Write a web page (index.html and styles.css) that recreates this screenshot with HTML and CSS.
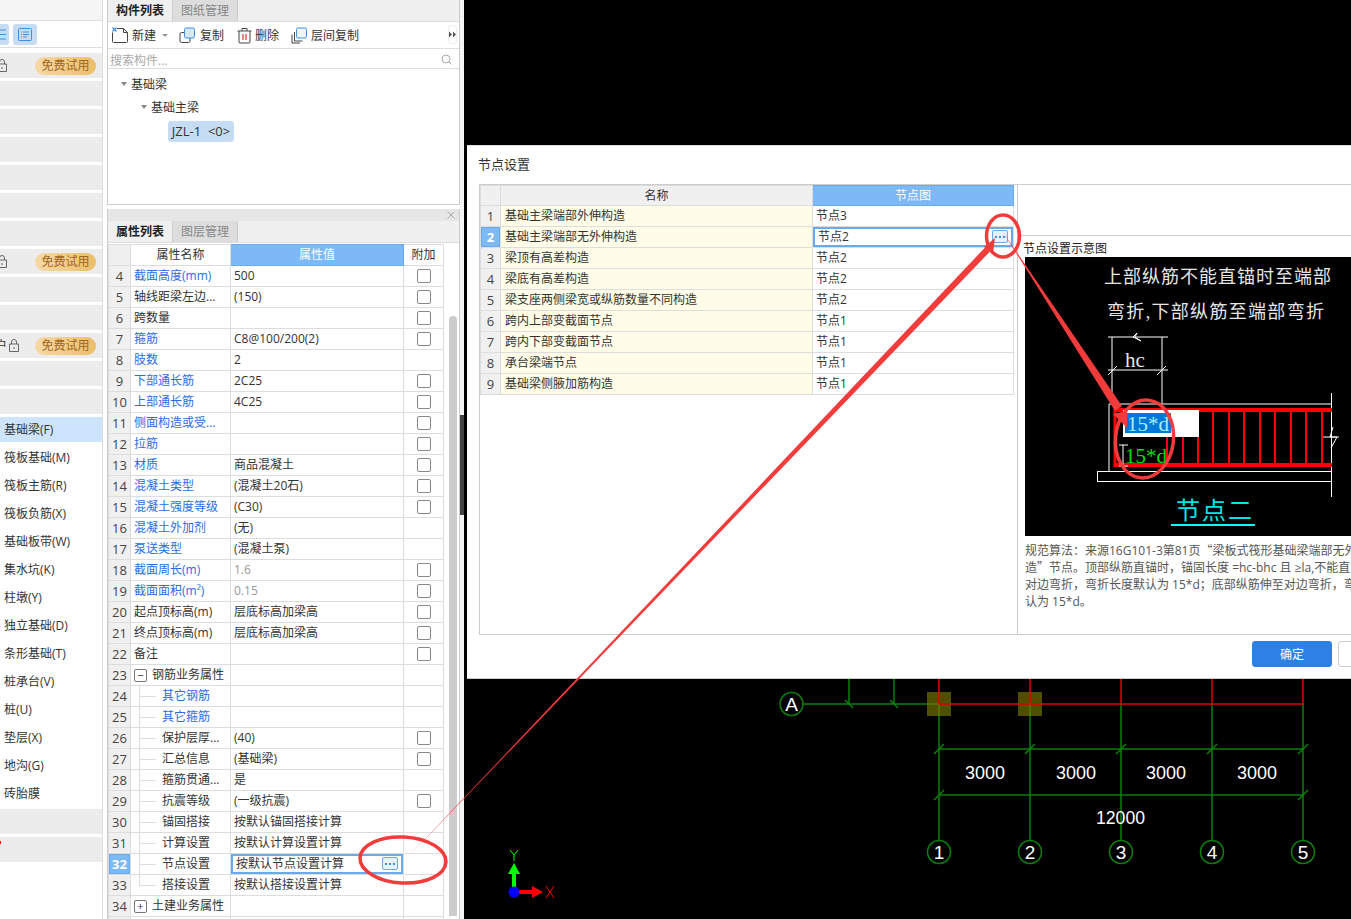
FILE: index.html
```html
<!DOCTYPE html>
<html lang="zh-CN">
<head>
<meta charset="UTF-8" />
<title>节点设置</title>
<link rel="stylesheet" href="styles.css">
</head>
<body>
<div class="app">

  <!-- left category list -->
  <div class="side">
    <div class="side-top"></div>
    <div class="side-icons">
      <span class="icon-tile cut">
        <svg width="9" height="21" viewBox="0 0 9 21"><path d="M0 6h6M0 10.500h6M0 15h6" stroke="#3f8fe0" fill="none"/></svg>
      </span>
      <span class="icon-tile">
        <svg width="24" height="21" viewBox="0 0 24 21"><rect x="5.500" y="4.500" width="13" height="12" rx="1" stroke="#3f8fe0" fill="none"/><path d="M8 8h1M10 8h6M8 10.500h1M10 10.500h6M8 13h1M10 13h4" stroke="#3f8fe0" fill="none"/></svg>
      </span>
    </div>
    <div class="side-list">
      <div class="side-row gray"><svg class="lock cut-lock" width="10" height="13" viewBox="0 0 10 13"><path d="M2.500 5V3a2.500 2.500 0 0 1 5 0v2M.5 5h9v7.500h-9zM5 8v2" stroke="#666" fill="none"/></svg><span class="free-btn">免费试用</span></div>
      <div class="side-row gray"></div>
      <div class="side-row gray"></div>
      <div class="side-row gray"></div>
      <div class="side-row gray"></div>
      <div class="side-row gray"></div>
      <div class="side-row gray"></div>
      <div class="side-row gray"><svg class="lock cut-lock" width="10" height="13" viewBox="0 0 10 13"><path d="M2.500 5V3a2.500 2.500 0 0 1 5 0v2M.5 5h9v7.500h-9zM5 8v2" stroke="#666" fill="none"/></svg><span class="free-btn">免费试用</span></div>
      <div class="side-row gray"></div>
      <div class="side-row gray"></div>
      <div class="side-row gray"><span class="cut-text">户</span><svg class="lock" width="10" height="13" viewBox="0 0 10 13"><path d="M2.500 5V3a2.500 2.500 0 0 1 5 0v2M.5 5h9v7.500h-9zM5 8v2" stroke="#666" fill="none"/></svg><span class="free-btn">免费试用</span></div>
      <div class="side-row gray"></div>
      <div class="side-row gray"></div>
      <div class="side-row active">基础梁(F)</div>
      <div class="side-row">筏板基础(M)</div>
      <div class="side-row">筏板主筋(R)</div>
      <div class="side-row">筏板负筋(X)</div>
      <div class="side-row">基础板带(W)</div>
      <div class="side-row">集水坑(K)</div>
      <div class="side-row">柱墩(Y)</div>
      <div class="side-row">独立基础(D)</div>
      <div class="side-row">条形基础(T)</div>
      <div class="side-row">桩承台(V)</div>
      <div class="side-row">桩(U)</div>
      <div class="side-row">垫层(X)</div>
      <div class="side-row">地沟(G)</div>
      <div class="side-row">砖胎膜</div>
      <div class="side-row gray"></div>
      <div class="side-row gray"><span class="red-dot"></span></div>
    </div>
  </div>

  <!-- component list and property list -->
  <div class="panel">
    <div class="pane">
      <div class="tabs">
        <span class="tab on">构件列表</span>
        <span class="tab">图纸管理</span>
      </div>
      <div class="toolbar">
        <svg class="tool-icon" width="17" height="17" viewBox="0 0 17 17"><path d="M5 1.500h6.500l4 4v9a1 1 0 0 1-1 1h-13a1 1 0 0 1-1-1v-9" stroke="#444" fill="none"/><path d="M11.500 1.500v4h4" stroke="#444" fill="none"/><path d="M.5 .5l4 4M4.500 .5l-4 4" stroke="#3f8fe0" stroke-width="1.200"/></svg>
        <span class="tool-text">新建</span>
        <span class="caret"></span>
        <svg class="tool-icon copy" width="17" height="17" viewBox="0 0 17 17"><rect x="1" y="5.500" width="10" height="10" rx="1.500" stroke="#444" fill="#fff"/><rect x="5.500" y="1" width="10" height="10" rx="1.500" stroke="#3f8fe0" fill="#d5e7fa"/></svg>
        <span class="tool-text">复制</span>
        <svg class="tool-icon del" width="15" height="17" viewBox="0 0 15 17"><path d="M.5 4h14M5 4V1.500h5V4M2 4v11a1 1 0 0 0 1 1h9a1 1 0 0 0 1-1V4" stroke="#444" fill="none"/><path d="M6 7v6M9 7v6" stroke="#e03030" stroke-width="1.200"/></svg>
        <span class="tool-text">删除</span>
        <svg class="tool-icon floor" width="17" height="17" viewBox="0 0 17 17"><path d="M3.500 5v9h8M1 7.500V16h8" stroke="#444" fill="none"/><rect x="5.500" y="1" width="10" height="10" rx="1.500" stroke="#3f8fe0" fill="#eef5fd"/></svg>
        <span class="tool-text">层间复制</span>
        <span class="more-tools">
          <svg width="7" height="7" viewBox="0 0 7 7"><path d="M0 .5l3 3-3 3zM4 .5l3 3-3 3z" fill="#555"/></svg>
        </span>
      </div>
      <div class="search">
        <span>搜索构件...</span>
        <svg width="11" height="11" viewBox="0 0 11 11"><circle cx="5" cy="5" r="4" stroke="#aaa" fill="none"/><path d="M8 8l2.500 2.500" stroke="#aaa"/></svg>
      </div>
      <div class="tree">
        <div class="tree-item"><span class="tree-arrow"></span>基础梁</div>
        <div class="tree-item lvl2"><span class="tree-arrow"></span>基础主梁</div>
        <div class="tree-leaf">JZL-1 &nbsp;&lt;0&gt;</div>
      </div>
    </div>

    <div class="pane lower">
      <div class="close-bar">
        <svg width="8" height="8" viewBox="0 0 8 8"><path d="M.5 .5l7 7M7.500 .5l-7 7" stroke="#aaa"/></svg>
      </div>
      <div class="tabs">
        <span class="tab on">属性列表</span>
        <span class="tab">图层管理</span>
      </div>
      <div class="prop-wrap">
        <table class="grid prop">
          <colgroup><col class="c-idx"><col class="c-name"><col class="c-val"><col class="c-add"></colgroup>
          <tr class="head"><th class="idx"></th><th>属性名称</th><th class="cur">属性值</th><th>附加</th></tr>
          <tr><td class="idx">4</td><td class="link">截面高度(mm)</td><td>500</td><td><i class="chk"></i></td></tr>
          <tr><td class="idx">5</td><td>轴线距梁左边...</td><td>(150)</td><td><i class="chk"></i></td></tr>
          <tr><td class="idx">6</td><td>跨数量</td><td></td><td><i class="chk"></i></td></tr>
          <tr><td class="idx">7</td><td class="link">箍筋</td><td>C8@100/200(2)</td><td><i class="chk"></i></td></tr>
          <tr><td class="idx">8</td><td class="link">肢数</td><td>2</td><td></td></tr>
          <tr><td class="idx">9</td><td class="link">下部通长筋</td><td>2C25</td><td><i class="chk"></i></td></tr>
          <tr><td class="idx">10</td><td class="link">上部通长筋</td><td>4C25</td><td><i class="chk"></i></td></tr>
          <tr><td class="idx">11</td><td class="link">侧面构造或受...</td><td></td><td><i class="chk"></i></td></tr>
          <tr><td class="idx">12</td><td class="link">拉筋</td><td></td><td><i class="chk"></i></td></tr>
          <tr><td class="idx">13</td><td class="link">材质</td><td>商品混凝土</td><td><i class="chk"></i></td></tr>
          <tr><td class="idx">14</td><td class="link">混凝土类型</td><td>(混凝土20石)</td><td><i class="chk"></i></td></tr>
          <tr><td class="idx">15</td><td class="link">混凝土强度等级</td><td>(C30)</td><td><i class="chk"></i></td></tr>
          <tr><td class="idx">16</td><td class="link">混凝土外加剂</td><td>(无)</td><td></td></tr>
          <tr><td class="idx">17</td><td class="link">泵送类型</td><td>(混凝土泵)</td><td></td></tr>
          <tr><td class="idx">18</td><td class="link">截面周长(m)</td><td class="dim">1.6</td><td><i class="chk"></i></td></tr>
          <tr><td class="idx">19</td><td class="link">截面面积(m²)</td><td class="dim">0.15</td><td><i class="chk"></i></td></tr>
          <tr><td class="idx">20</td><td>起点顶标高(m)</td><td>层底标高加梁高</td><td><i class="chk"></i></td></tr>
          <tr><td class="idx">21</td><td>终点顶标高(m)</td><td>层底标高加梁高</td><td><i class="chk"></i></td></tr>
          <tr><td class="idx">22</td><td>备注</td><td></td><td><i class="chk"></i></td></tr>
          <tr><td class="idx">23</td><td class="group"><i class="fold">−</i>钢筋业务属性</td><td></td><td></td></tr>
          <tr><td class="idx">24</td><td class="child link">其它钢筋</td><td></td><td></td></tr>
          <tr><td class="idx">25</td><td class="child link">其它箍筋</td><td></td><td></td></tr>
          <tr><td class="idx">26</td><td class="child">保护层厚...</td><td>(40)</td><td><i class="chk"></i></td></tr>
          <tr><td class="idx">27</td><td class="child">汇总信息</td><td>(基础梁)</td><td><i class="chk"></i></td></tr>
          <tr><td class="idx">28</td><td class="child">箍筋贯通...</td><td>是</td><td></td></tr>
          <tr><td class="idx">29</td><td class="child">抗震等级</td><td>(一级抗震)</td><td><i class="chk"></i></td></tr>
          <tr><td class="idx">30</td><td class="child">锚固搭接</td><td>按默认锚固搭接计算</td><td></td></tr>
          <tr><td class="idx">31</td><td class="child">计算设置</td><td>按默认计算设置计算</td><td></td></tr>
          <tr><td class="idx sel">32</td><td class="child">节点设置</td><td class="editing"><span>按默认节点设置计算</span><span class="dots"><svg width="10" height="2" viewBox="0 0 10 2"><path d="M0 0h2v2H0zM4 0h2v2H4zM8 0h2v2H8z" fill="#3f8fe0"/></svg></span></td><td></td></tr>
          <tr><td class="idx">33</td><td class="child last">搭接设置</td><td>按默认搭接设置计算</td><td></td></tr>
          <tr><td class="idx">34</td><td class="group"><i class="fold">+</i>土建业务属性</td><td></td><td></td></tr>
          <tr><td class="idx"></td><td></td><td></td><td></td></tr>
        </table>
        <div class="scroll"><div class="thumb"></div></div>
      </div>
    </div>
  </div>

  <div class="strip"><div class="strip-handle"></div></div>

  <!-- black drawing area -->
  <div class="canvas">
    <svg class="cad" width="887" height="919" viewBox="464 0 887 919">
      <g stroke="#0a800a" stroke-width="1.500" fill="none">
        <path d="M802 704H939M849 679V704M894 679V704M845 700l8 8M890 700l8 8"/>
        <path d="M939 704V840M1030 704V840M1121 704V840M1212 704V840M1303 704V840"/>
        <path d="M939 749H1303M939 795H1303"/>
        <path d="M934 754l10-10M1025 754l10-10M1116 754l10-10M1207 754l10-10M1298 754l10-10M934 800l10-10M1298 800l10-10"/>
        <circle cx="791.500" cy="704" r="11.500"/>
        <circle cx="939" cy="852" r="11.500"/>
        <circle cx="1030" cy="852" r="11.500"/>
        <circle cx="1121" cy="852" r="11.500"/>
        <circle cx="1212" cy="852" r="11.500"/>
        <circle cx="1303" cy="852" r="11.500"/>
      </g>
      <g fill="#7a7a00" fill-opacity=".65">
        <rect x="927" y="692" width="24" height="24"/>
        <rect x="1018" y="692" width="24" height="24"/>
      </g>
      <path d="M939 704V679M1030 704V679M1121 704V679M1212 704V679M1303 704V679M939 704H1303" stroke="#e00000" stroke-width="1.500" fill="none"/>
      <g class="cad-text">
        <text x="791.500" y="711" font-size="19" text-anchor="middle">A</text>
        <text x="939" y="859" font-size="19" text-anchor="middle">1</text>
        <text x="1030" y="859" font-size="19" text-anchor="middle">2</text>
        <text x="1121" y="859" font-size="19" text-anchor="middle">3</text>
        <text x="1212" y="859" font-size="19" text-anchor="middle">4</text>
        <text x="1303" y="859" font-size="19" text-anchor="middle">5</text>
        <text x="965" y="779" font-size="19" textLength="40" lengthAdjust="spacingAndGlyphs">3000</text>
        <text x="1056" y="779" font-size="19" textLength="40" lengthAdjust="spacingAndGlyphs">3000</text>
        <text x="1146" y="779" font-size="19" textLength="40" lengthAdjust="spacingAndGlyphs">3000</text>
        <text x="1237" y="779" font-size="19" textLength="40" lengthAdjust="spacingAndGlyphs">3000</text>
        <text x="1096" y="824" font-size="19" textLength="49" lengthAdjust="spacingAndGlyphs">12000</text>
      </g>
      <path d="M514 892V872" stroke="#00ff00" stroke-width="4"/>
      <path d="M514 863l6 11h-12z" fill="#00ff00"/>
      <path d="M510 850l4 5 4-5M514 855v6" stroke="#00ff00" fill="none"/>
      <path d="M514 892H535" stroke="#ff0000" stroke-width="4"/>
      <path d="M543 892l-11 6v-12z" fill="#ff0000"/>
      <path d="M546 886l8 12M554 886l-8 12" stroke="#ff0000" fill="none"/>
      <circle cx="514" cy="892" r="5.500" fill="#0000ff"/>
    </svg>

    <div class="dialog">
      <div class="dlg-title">节点设置</div>
      <div class="dlg-frame">
        <div class="dlg-left">
          <table class="grid node">
            <colgroup><col class="n-idx"><col class="n-name"><col class="n-val"></colgroup>
            <tr class="head"><th class="idx"></th><th class="plain">名称</th><th class="cur">节点图</th></tr>
            <tr><td class="idx">1</td><td class="cream">基础主梁端部外伸构造</td><td>节点3</td></tr>
            <tr><td class="idx sel">2</td><td class="cream">基础主梁端部无外伸构造</td><td class="editing"><span>节点2</span><span class="dots"><svg width="10" height="2" viewBox="0 0 10 2"><path d="M0 0h2v2H0zM4 0h2v2H4zM8 0h2v2H8z" fill="#3f8fe0"/></svg></span></td></tr>
            <tr><td class="idx">3</td><td class="cream">梁顶有高差构造</td><td>节点2</td></tr>
            <tr><td class="idx">4</td><td class="cream">梁底有高差构造</td><td>节点2</td></tr>
            <tr><td class="idx">5</td><td class="cream">梁支座两侧梁宽或纵筋数量不同构造</td><td>节点2</td></tr>
            <tr><td class="idx">6</td><td class="cream">跨内上部变截面节点</td><td>节点1</td></tr>
            <tr><td class="idx">7</td><td class="cream">跨内下部变截面节点</td><td>节点1</td></tr>
            <tr><td class="idx">8</td><td class="cream">承台梁端节点</td><td>节点1</td></tr>
            <tr><td class="idx">9</td><td class="cream">基础梁侧腋加筋构造</td><td>节点1</td></tr>
          </table>
        </div>
        <div class="dlg-right">
          <div class="dlg-blank"></div>
          <div class="pic-label">节点设置示意图</div>
          <svg class="pic" width="400" height="279" viewBox="1025 257 400 279">
            <g class="pic-serif" fill="#e6e6e6">
              <text x="1104" y="283" font-size="18" textLength="227">上部纵筋不能直锚时至端部</text>
              <text x="1107" y="318" font-size="18" textLength="217">弯折,下部纵筋至端部弯折</text>
              <text x="1125" y="367" font-size="21">hc</text>
            </g>
            <g stroke="#fff" fill="none">
              <path d="M1112 337V404M1162 337V404M1108 337H1168M1108 370H1168"/>
              <path d="M1108 375l9-9M1157 375l9-9M1133 337l4-4 -2 4 6 4z"/>
              <path d="M1109 404V471M1109 404H1332M1331.500 393V497"/>
              <rect x="1097.500" y="471.500" width="234" height="10"/>
              <path d="M1323 437h16M1333 427l-3 10 7 0-6 11"/>
            </g>
            <g stroke="#ff0000">
              <path d="M1115 410H1332M1115 465H1332" stroke-width="4"/>
              <path d="M1115 408V467" stroke-width="3"/>
              <path d="M1167 437V465M1183 437V465M1198 437V465M1213 410V465M1229 410V465M1244 410V465M1260 410V465M1275 410V465M1291 410V465M1306 410V465M1322 410V465" stroke-width="2"/>
            </g>
            <rect x="1123" y="410" width="76" height="27" fill="#fff"/>
            <rect x="1125" y="413" width="46" height="20" fill="#0078d7"/>
            <text class="pic-serif" x="1127" y="431" font-size="21" fill="#aef">15*d</text>
            <text class="pic-serif" x="1125" y="463" font-size="21" fill="#00e000">15*d</text>
            <path d="M1123 445v20M1119 445h9M1119 466h9" stroke="#fff" fill="none"/>
            <text class="pic-serif" x="1176" y="519" font-size="24" letter-spacing="2" fill="#00e5e5">节点二</text>
            <path d="M1171 525H1255" stroke="#00ffff" stroke-width="2"/>
          </svg>
          <div class="pic-desc">规范算法：来源16G101-3第81页<span class="cjk">“</span>梁板式筏形基础梁端部无外伸构<br>造<span class="cjk">”</span>节点。顶部纵筋直锚时，锚固长度 =hc-bhc 且 ≥la,不能直锚时伸至<br>对边弯折，弯折长度默认为 15*d；底部纵筋伸至对边弯折，弯折长度默<br>认为 15*d。</div>
        </div>
      </div>
      <div class="dlg-foot">
        <span class="btn primary">确定</span>
        <span class="btn">取消</span>
      </div>
    </div>
  </div>
</div>

<!-- red marks someone drew on the screenshot -->
<svg class="marks" width="1351" height="919" viewBox="0 0 1351 919">
  <g fill="none" stroke="#f23c3c" stroke-width="3.500">
    <ellipse cx="403" cy="860" rx="43" ry="23" transform="rotate(3 403 860)"/>
    <ellipse cx="1003" cy="236" rx="16.500" ry="21"/>
    <ellipse cx="1144.500" cy="439" rx="29" ry="39" transform="rotate(6 1144.500 439)"/>
  </g>
  <path d="M407 858L985.500 247L990 251.500z" fill="#f23c3c"/>
  <path d="M995 238L984 247L993 253z" fill="#f23c3c"/>
  <path d="M1003 232L1115 411L1122 406z" fill="#f23c3c"/>
  <path d="M1127 428L1113 414L1127 411z" fill="#f23c3c"/>
</svg>
</body>
</html>
```

FILE: styles.css
```css
html, body {
  margin: 0; padding: 0;
  height: 919px;
  overflow: hidden;
  font-family: "Open Sans", "Noto Sans CJK SC", sans-serif;
  font-size: 12px;
  color: #333;
  background: #fff;
}
.app {
  display: flex;
  height: 919px;
}

/* left list */
.side {
  flex: none;
  width: 102px;
  margin-right: 4px;
  border-right: 1px solid #ddd;
}
.side-top {
  height: 20px;
  background: #f5f5f5;
  border-bottom: 1px solid #ddd;
}
.side-icons {
  display: flex;
  gap: 4px;
  height: 27px;
  padding-top: 3px;
  box-sizing: border-box;
  border-bottom: 1px solid #ddd;
}
.icon-tile {
  display: block;
  width: 24px;
  height: 21px;
  background: #c5dcf2;
  border-radius: 3px;
}
.icon-tile.cut {
  width: 9px;
  border-radius: 0 3px 3px 0;
}
.side-list {
  padding-top: 5px;
  display: flex;
  flex-direction: column;
  gap: 3px;
}
.side-row {
  position: relative;
  display: flex;
  align-items: center;
  height: 25px;
  padding-left: 4px;
  line-height: 24px;
  white-space: nowrap;
}
.side-row.gray { background: #ececec; }
.side-row.active { background: #cde4fc; }
.free-btn {
  position: absolute;
  left: 35px;
  top: 4px;
  width: 61px;
  height: 18px;
  line-height: 18px;
  text-align: center;
  border-radius: 9px;
  color: #a0651a;
  background: linear-gradient(90deg, #f6d9a8, #edbd68);
}
.lock { position: absolute; left: 9px; top: 6px; }
.lock.cut-lock { left: -3px; }
.cut-text { margin-left: -9px; }
.red-dot {
  position: absolute;
  left: 0; top: 4px;
  width: 1px; height: 3px;
  background: #e00;
}

/* middle panel */
.panel {
  flex: none;
  width: 353px;
  display: flex;
  flex-direction: column;
}
.pane {
  border-left: 1px solid #ccc;
  border-right: 1px solid #ccc;
}
.pane.lower {
  margin-top: 4px;
  flex: 1;
  min-height: 0;
  overflow: hidden;
}
.tabs {
  display: flex;
  height: 21px;
  background: #f0f0f0;
  border-bottom: 1px solid #ddd;
}
.tab {
  width: 64px;
  line-height: 21px;
  text-align: center;
  color: #888;
  background: #ddd;
  border-right: 1px solid #ccc;
}
.tab.on {
  color: #222;
  background: #f0f0f0;
  font-weight: bold;
}
.toolbar {
  position: relative;
  display: flex;
  align-items: center;
  height: 26px;
  padding-left: 4px;
  border-bottom: 1px solid #ddd;
}
.tool-icon { flex: none; }
.tool-text {
  margin-left: 3px;
  padding-top: 2px;
  line-height: 20px;
}
.tool-icon.copy { margin-left: 11px; }
.tool-icon.copy + .tool-text { margin-left: 4px; }
.tool-icon.del { margin-left: 13px; }
.tool-icon.floor { margin-left: 12px; }
.caret {
  width: 0; height: 0;
  margin-left: 6px;
  border: 3px solid transparent;
  border-top: 3px solid #999;
  border-bottom: 0;
}
.more-tools {
  position: absolute;
  right: 2px; top: 3px;
  width: 9px; height: 19px;
  display: flex;
  align-items: center;
  justify-content: center;
  border: 1px solid #eee;
  border-radius: 3px;
  box-sizing: border-box;
}
.search {
  display: flex;
  align-items: center;
  justify-content: space-between;
  height: 17px;
  padding: 2px 7px 0 2px;
  color: #aaa;
  border-bottom: 1px solid #ddd;
}
.tree {
  height: 136px;
  padding-top: 3px;
  box-sizing: border-box;
  border-bottom: 1px solid #ccc;
}
.tree-item {
  display: flex;
  align-items: center;
  height: 23px;
  padding-left: 13px;
}
.tree-item.lvl2 { padding-left: 33px; }
.tree-arrow {
  width: 0; height: 0;
  margin-right: 4px;
  border: 3px solid transparent;
  border-top: 4px solid #888;
  border-bottom: 0;
}
.tree-leaf {
  width: 66px;
  height: 21px;
  margin: 3px 0 0 60px;
  font-size: 13px;
  line-height: 21px;
  text-align: center;
  background: #c5dcf2;
  border-radius: 3px;
}
.close-bar {
  display: flex;
  align-items: center;
  justify-content: flex-end;
  height: 12px;
  padding-right: 4px;
  background: #e6e6e6;
}

/* tables */
.grid {
  table-layout: fixed;
  border-collapse: collapse;
}
.grid th, .grid td {
  height: 21px;
  padding: 0 3px;
  border: 1px solid #ddd;
  font-weight: normal;
  text-align: left;
  white-space: nowrap;
  overflow: hidden;
  line-height: 20px;
  box-sizing: border-box;
}
.grid tr { height: 21px; }
.node .head, .node .head th { height: 20px; }
.node .head th { line-height: 19px; }
.grid .head th { text-align: center; }
.grid th.cur {
  color: #fff;
  background: #7db8f7;
  border: 1px solid #6aa9ea;
}
.grid th.plain { background: #f0f0f0; }
.grid .idx {
  padding: 0;
  text-align: center;
  font-size: 13px;
  color: #444;
  background: #f0f0f0;
}
.grid .idx.sel {
  color: #fff;
  font-weight: bold;
  background: #7db8f7;
  box-shadow: inset 0 0 0 1px #6aa9ea;
}
.grid .link { color: #2a6ce6; }
.grid .dim { color: #999; }
.grid .cream { background: #fffde8; padding-left: 4px; }
.grid td.editing {
  position: relative;
  padding-left: 5px;
  box-shadow: inset 0 0 0 2px #6aa9ea;
}
.dots {
  position: absolute;
  right: 5px; top: 3px;
  width: 16px; height: 13px;
  display: flex;
  align-items: center;
  justify-content: center;
  border: 1px solid #6aa9ea;
  border-radius: 2px;
  background: #e8f2fd;
  box-sizing: border-box;
}
.chk {
  display: block;
  width: 12px; height: 12px;
  margin-left: 10px;
  border: 1px solid #888;
  border-radius: 2px;
}
.grid td.group { position: relative; padding-left: 21px; }
.fold {
  position: absolute;
  left: 3px; top: 4px;
  width: 11px; height: 11px;
  line-height: 10px;
  text-align: center;
  font-style: normal;
  font-size: 11px;
  border: 1px solid #777;
  border-radius: 2px;
}
.grid td.child { position: relative; padding-left: 31px; }
.grid td.child::before {
  content: "";
  position: absolute;
  left: 8px; top: -1px;
  width: 16px; height: 22px;
  border-left: 1px solid #ddd;
  background: linear-gradient(#ddd, #ddd) no-repeat 0 11px / 16px 1px;
}
.grid td.child.last::before { height: 12px; }

.prop-wrap {
  display: flex;
  align-items: flex-start;
}
.prop { width: 335px; flex: none; margin-top: 1px; }
.c-idx { width: 22px; }
.c-name { width: 100px; }
.c-val { width: 173px; }
.c-add { width: 40px; }
.scroll {
  flex: none;
  width: 8px;
  margin-left: 5px;
}
.thumb {
  height: 600px;
  margin-top: 73px;
  background: #ccc;
  border-radius: 4px 4px 0 0;
}

.strip {
  flex: none;
  width: 4px;
  background: #f4f4f4;
}
.strip-handle {
  height: 100px;
  margin-top: 415px;
  background: #444;
}

/* drawing area */
.canvas {
  position: relative;
  flex: 1;
  background: #000;
}
.cad { display: block; }
.cad-text text {
  font-family: "Liberation Sans", sans-serif;
  fill: #fff;
}
.dialog {
  position: absolute;
  left: 3px; top: 145px;
  width: 960px;
  height: 534px;
  display: flex;
  flex-direction: column;
  background: #fff;
  box-sizing: border-box;
  border-top: 1px solid #ddd;
  border-bottom: 1px solid #ccc;
}
.dlg-title {
  flex: none;
  height: 38px;
  padding-left: 11px;
  font-size: 13px;
  line-height: 36px;
}
.dlg-frame {
  flex: none;
  display: flex;
  height: 451px;
  box-sizing: border-box;
  margin-left: 12px;
  border-left: 1px solid #ccc;
  border-top: 1px solid #ccc;
  border-bottom: 1px solid #ccc;
}
.dlg-left {
  flex: none;
  width: 538px;
  border-right: 1px solid #ccc;
  box-sizing: border-box;
}
.node { width: 533px; }
.n-idx { width: 20px; }
.n-name { width: 312px; }
.n-val { width: 201px; }
.dlg-right { flex: 1; min-width: 0; }
.dlg-blank {
  height: 50px;
  border-bottom: 1px solid #ccc;
}
.pic-label {
  height: 21px;
  padding-left: 5px;
  line-height: 26px;
  color: #222;
}
.pic {
  display: block;
  margin-left: 7px;
  background: #000;
}
.pic-serif text, text.pic-serif {
  font-family: "Liberation Serif", "Noto Sans CJK SC", serif;
}
.pic-desc {
  margin-top: 6px;
  padding-left: 7px;
  line-height: 17px;
  color: #555;
  white-space: nowrap;
}
.cjk {
  font-family: "Noto Sans CJK SC", sans-serif;
  line-height: 1;
}
.dlg-foot {
  display: flex;
  justify-content: flex-end;
  gap: 6px;
  padding: 6px 9px 0 0;
}
.btn {
  width: 80px;
  height: 26px;
  line-height: 26px;
  text-align: center;
  border: 1px solid #ccc;
  border-radius: 3px;
  box-sizing: border-box;
}
.btn.primary {
  color: #fff;
  background: #2f80e4;
  border-color: #2f80e4;
}
.marks {
  position: absolute;
  left: 0; top: 0;
  pointer-events: none;
}
```
